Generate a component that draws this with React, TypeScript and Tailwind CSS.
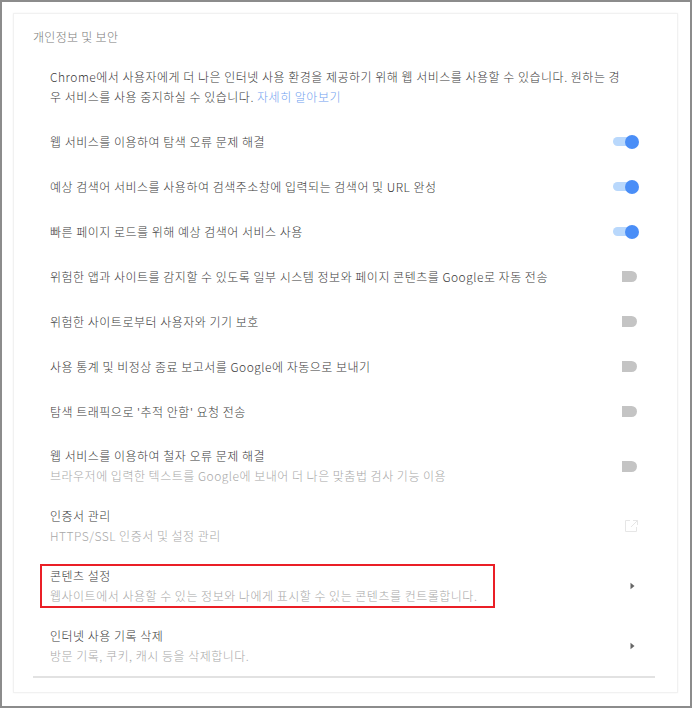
import React from "react";

function ToggleOn() {
  return (
    <div className="relative w-[30px] h-[16px] flex items-center">
      <div className="absolute left-[1px] w-[22px] h-[9px] rounded-full bg-[#b9d8fc]" />
      <div className="absolute right-[3px] w-[14px] h-[14px] rounded-full bg-[#4a8ef7]" />
    </div>
  );
}

function ToggleOff() {
  return (
    <div className="w-[30px] h-[16px] flex items-center justify-end pr-[5px]">
      <div className="w-[15px] h-[11px] bg-[#c4c4c4] rounded-l-[3px] rounded-r-full" />
    </div>
  );
}

function Arrow() {
  return (
    <div className="w-[30px] h-[16px] flex items-center justify-end pr-[7px]">
      <svg width="5" height="8" viewBox="0 0 5 8">
        <path d="M0.5 0.8 L4.5 4 L0.5 7.2 Z" fill="#666" />
      </svg>
    </div>
  );
}

function OpenIcon() {
  return (
    <div className="w-[30px] h-[16px] flex items-center justify-end pr-[3px]">
      <svg width="15" height="14" viewBox="0 0 15 14" fill="none" stroke="#e6e6e6" strokeWidth="1">
        <path d="M6 1.5 H1.5 V12.5 H12.5 V8" />
        <path d="M9 1.5 H13.5 V6" />
        <path d="M13.5 1.5 L7 8" />
      </svg>
    </div>
  );
}

function Row({
  title,
  sub,
  control,
  boxed,
  extra,
}: {
  title: string;
  sub?: string;
  control: React.ReactNode;
  boxed?: boolean;
  extra?: string;
}) {
  const text = (
    <div className="flex flex-col">
      <div className="text-[12px] leading-[20px] tracking-[0.5px] font-light text-[#3a3a3a] whitespace-nowrap">{title}</div>
      {sub && (
        <div className="text-[12px] leading-[20px] tracking-[0.5px] font-light text-[#a8a8a8] whitespace-nowrap">{sub}</div>
      )}
    </div>
  );
  return (
    <div
      className={`flex items-center justify-between pl-[17px] pr-[13px] ${sub ? "h-[60px]" : "h-[45px]"} ${extra ?? ""}`}
    >
      {boxed ? (
        <div className="-ml-[10px] border-2 border-[#ea1f26] pl-[8px] pr-[16px] -my-[2px]">{text}</div>
      ) : (
        text
      )}
      {control}
    </div>
  );
}

export default function App() {
  return (
    <div className="w-[692px] h-[708px] bg-white border-2 border-[#8c8c8c] font-['Noto_Sans_CJK_KR','Noto_Sans',sans-serif] pt-[11px] pl-[11px] pr-[12px]">
      <div className="h-[680px] border border-[#f1f1f1] shadow-[0_0_2px_rgba(0,0,0,0.05)] pt-[13px] pl-[19px] pr-[22px]">
        <div className="text-[12px] leading-[20px] tracking-[0.3px] font-light text-[#7a7a7a]">개인정보 및 보안</div>
        <div className="mt-[20px] pl-[17px] text-[12px] leading-[20px] tracking-[0.5px] font-light text-[#3a3a3a] whitespace-nowrap">
          Chrome에서 사용자에게 더 나은 인터넷 사용 환경을 제공하기 위해 웹 서비스를 사용할 수 있습니다. 원하는 경
          <br />우 서비스를 사용 중지하실 수 있습니다. <span className="text-[#6fa2ef]">자세히 알아보기</span>
        </div>
        <div className="mt-[12px] flex flex-col">
          <Row title="웹 서비스를 이용하여 탐색 오류 문제 해결" control={<ToggleOn />} />
          <Row title="예상 검색어 서비스를 사용하여 검색주소창에 입력되는 검색어 및 URL 완성" control={<ToggleOn />} />
          <Row title="빠른 페이지 로드를 위해 예상 검색어 서비스 사용" control={<ToggleOn />} />
          <Row
            title="위험한 앱과 사이트를 감지할 수 있도록 일부 시스템 정보와 페이지 콘텐츠를 Google로 자동 전송"
            control={<ToggleOff />}
          />
          <Row title="위험한 사이트로부터 사용자와 기기 보호" control={<ToggleOff />} />
          <Row title="사용 통계 및 비정상 종료 보고서를 Google에 자동으로 보내기" control={<ToggleOff />} />
          <Row title="탐색 트래픽으로 '추적 안함' 요청 전송" control={<ToggleOff />} />
          <Row
            title="웹 서비스를 이용하여 철자 오류 문제 해결"
            sub="브라우저에 입력한 텍스트를 Google에 보내어 더 나은 맞춤법 검사 기능 이용"
            control={<ToggleOff />}
            extra="mt-[2px] h-[58px]"
          />
          <Row title="인증서 관리" sub="HTTPS/SSL 인증서 및 설정 관리" control={<OpenIcon />} />
          <Row
            title="콘텐츠 설정"
            sub="웹사이트에서 사용할 수 있는 정보와 나에게 표시할 수 있는 콘텐츠를 컨트롤합니다."
            control={<Arrow />}
            boxed
          />
          <Row title="인터넷 사용 기록 삭제" sub="방문 기록, 쿠키, 캐시 등을 삭제합니다." control={<Arrow />} />
          <div className="h-[2px] bg-[#e2e2e2]" />
        </div>
      </div>
    </div>
  );
}
